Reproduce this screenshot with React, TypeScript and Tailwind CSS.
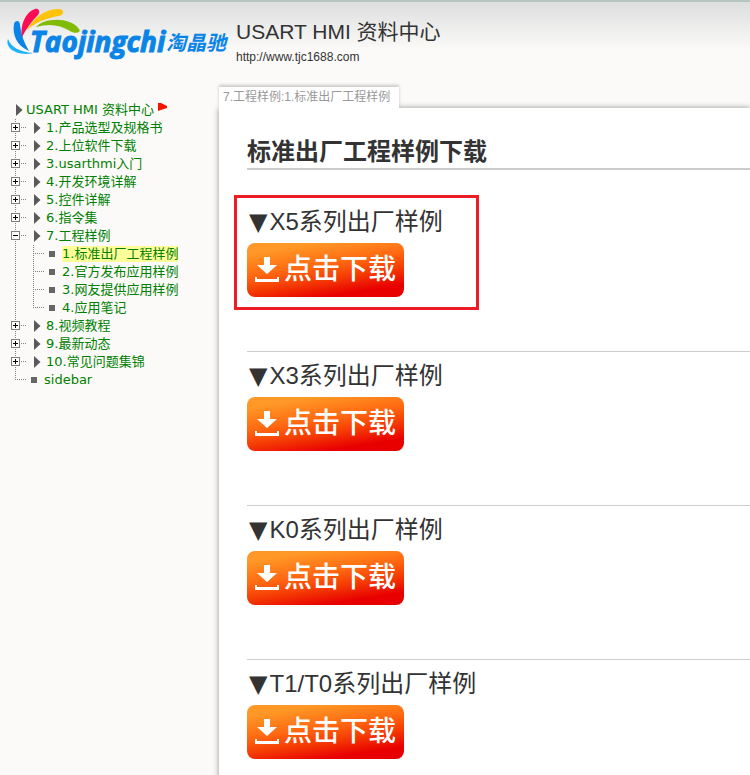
import React from "react";

type Leaf = { label: string; current?: boolean };
type Branch = { label: string; children?: Leaf[] };

const branches: Branch[] = [
  { label: "1.产品选型及规格书" },
  { label: "2.上位软件下载" },
  { label: "3.usarthmi入门" },
  { label: "4.开发环境详解" },
  { label: "5.控件详解" },
  { label: "6.指令集" },
  {
    label: "7.工程样例",
    children: [
      { label: "1.标准出厂工程样例", current: true },
      { label: "2.官方发布应用样例" },
      { label: "3.网友提供应用样例" },
      { label: "4.应用笔记" },
    ],
  },
  { label: "8.视频教程" },
  { label: "9.最新动态" },
  { label: "10.常见问题集锦" },
];

const downloads = ["X5系列出厂样例", "X3系列出厂样例", "K0系列出厂样例", "T1/T0系列出厂样例"];

/* Dotted connector of one tree row, with an optional fold box. */
function Twig({ box, line = "through", arm = true }: { box?: "plus" | "minus"; line?: "through" | "end"; arm?: boolean }) {
  return (
    <svg className="h-[18px] w-4 shrink-0" viewBox="0 0 16 18" shapeRendering="crispEdges" aria-hidden="true">
      <path d={line === "through" ? "M4.5 0V18" : "M4.5 0V9"} stroke="#808080" strokeDasharray="1 1" fill="none" />
      {arm && <path d="M4 8.5H15" stroke="#808080" strokeDasharray="1 1" fill="none" />}
      {box && (
        <>
          <rect x="0.5" y="4.5" width="8" height="8" fill="#fff" stroke="#808080" />
          <path d={box === "plus" ? "M2 8.5H7M4.5 6V11" : "M2 8.5H7"} stroke="#000" fill="none" />
        </>
      )}
    </svg>
  );
}

function Arrow() {
  return (
    <svg className="h-3 w-[7px] shrink-0" viewBox="0 0 7 12" aria-hidden="true">
      <path d="M0 0L6.5 6L0 12Z" fill="#5a5a5a" />
    </svg>
  );
}

function Bullet() {
  return <span className="size-1.5 shrink-0 bg-[#666]" />;
}

function TreeLink({ children, current }: { children: React.ReactNode; current?: boolean }) {
  return (
    <a href="#" aria-current={current ? "page" : undefined} className={current ? "bg-[#ffff99] leading-4" : "leading-4"}>
      {children}
    </a>
  );
}

function Logo() {
  return (
    <svg className="h-[60px] w-[232px] shrink-0" viewBox="0 0 232 60" role="img" aria-label="Taojingchi 淘晶驰">
      <path d="M8 39C11 47 20 52 33 53C26 55 14 54 9 47C7 44 7 41 8 39Z" fill="#1fb2fb" />
      <path d="M14 24C12 35 17 46 29 51C24 43 21 34 20 25C20 20 15 20 14 24Z" fill="#0a84e6" />
      <path d="M35 9C26 12 20 24 22 37C26 29 32 21 38 15C41 11 38 8 35 9Z" fill="#fb0c55" />
      <path d="M59 9C46 8 33 18 27 30C36 22 47 18 59 16C65 15 64 9 59 9Z" fill="#ffc30b" />
      <path d="M36 27C43 18 70 16 79 29C82 33 74 34 70 31C60 25 50 23 36 27Z" fill="#80bb05" />
      <text
        x="30"
        y="52"
        fill="#0a84e6"
        stroke="#0a84e6"
        className="font-['Open_Sans','Liberation_Sans',sans-serif] text-[28px] font-bold italic"
      >
        Taojingchi
      </text>
      <text
        x="166"
        y="50"
        fill="#0a84e6"
        className="font-['Liberation_Sans','Noto_Sans_CJK_SC',sans-serif] text-[20px] font-bold italic"
      >
        淘晶驰
      </text>
    </svg>
  );
}

function DownloadButton() {
  return (
    <button
      type="button"
      className="flex h-[54px] w-[157px] items-center gap-[5px] rounded-lg bg-[linear-gradient(171deg,#ff9826_14%,#ff6a12_42%,#f53c04_62%,#e80000_84%)] pl-2 text-[28px] leading-[56px] font-medium text-white"
    >
      <svg className="h-[26px] w-6 shrink-0" viewBox="0 0 24 26" fill="#fff" aria-hidden="true">
        <path d="M9 0H15V8H22L12 17L2 8H9Z" />
        <path d="M0 20H2V22H22V20H24V25H0Z" />
      </svg>
      <span className="whitespace-nowrap">点击下载</span>
    </button>
  );
}

function SectionTitle({ children }: { children: React.ReactNode }) {
  return (
    <h3 className="flex items-center gap-0.5 pt-[5px] pb-0.5 pl-0.5 text-2xl leading-[38px] font-normal">
      <span className="font-['DejaVu_Sans',sans-serif]">▼</span>
      <span>{children}</span>
    </h3>
  );
}

export default function App() {
  return (
    <div className="flex min-h-screen flex-col overflow-x-hidden bg-[#fbfaf9] font-['Liberation_Sans','Noto_Sans_CJK_SC',sans-serif] text-[#333]">
      <header className="flex h-[87px] border-t-2 border-[#b8c4bf] bg-[linear-gradient(#dcdedd,#fbfaf9_48px)]">
        <div className="-mt-0.5">
          <Logo />
        </div>
        <div className="pt-3.5 pl-1">
          <h1 className="text-[21px] leading-8">USART HMI 资料中心</h1>
          <p className="text-xs leading-[18px]">http://www.tjc1688.com</p>
        </div>
      </header>

      <div className="flex grow">
        <nav
          aria-label="目录"
          className="w-[219px] shrink-0 pt-3.5 pl-[11px] font-['DejaVu_Sans','Noto_Sans_CJK_SC',sans-serif] text-[13px] whitespace-nowrap text-[#008000]"
        >
          <div className="flex h-[18px] items-center pl-[5px]">
            <Arrow />
            <span className="ml-[3px] flex">
              <TreeLink>USART HMI 资料中心</TreeLink>
            </span>
            <svg className="mt-0.5 ml-1 h-2 w-[9px] self-start" viewBox="0 0 9 8" aria-hidden="true">
              <path d="M0 0H3L9 3V5L0 8Z" fill="#f51400" />
            </svg>
          </div>
          <ul>
            {branches.map((branch) => (
              <li key={branch.label}>
                <div className="flex h-[18px] items-center">
                  <Twig box={branch.children ? "minus" : "plus"} />
                  <span className="mr-[5px] ml-[7px] flex">
                    <Arrow />
                  </span>
                  <TreeLink>{branch.label}</TreeLink>
                </div>
                {branch.children && (
                  <ul>
                    {branch.children.map((leaf, i) => (
                      <li key={leaf.label} className="flex h-[18px] items-center">
                        <Twig arm={false} />
                        <span className="ml-0.5 flex">
                          <Twig line={i === branch.children!.length - 1 ? "end" : "through"} />
                        </span>
                        <span className="mr-[7px] ml-1 flex">
                          <Bullet />
                        </span>
                        <TreeLink current={leaf.current}>{leaf.label}</TreeLink>
                      </li>
                    ))}
                  </ul>
                )}
              </li>
            ))}
            <li className="flex h-[18px] items-center">
              <Twig line="end" />
              <span className="mr-[7px] ml-1 flex">
                <Bullet />
              </span>
              <TreeLink>sidebar</TreeLink>
            </li>
          </ul>
        </nav>

        <main className="flex min-w-0 grow flex-col">
          <div className="z-10 w-[180px] bg-white pl-1 text-xs leading-[21px] whitespace-nowrap text-[#999] shadow-[0_-2px_3px_rgba(0,0,0,0.2)]">
            7.工程样例:1.标准出厂工程样例
          </div>
          <div className="grow bg-white pt-7 pl-7 shadow-[0_0_6px_rgba(0,0,0,0.4)]">
            <h2 className="border-b-2 border-[#ccc] text-2xl leading-8 font-bold">标准出厂工程样例下载</h2>
            {downloads.map((title, i) => (
              <section
                key={title}
                className={i === 0 ? "relative mt-[27px] h-[154px] border-t border-transparent" : "h-[154px] border-t border-[#ccc]"}
              >
                <SectionTitle>{title}</SectionTitle>
                <DownloadButton />
                {i === 0 && (
                  <div className="pointer-events-none absolute -top-[3px] -left-[13px] h-[115px] w-[245px] border-[3px] border-[#ee1c25]" />
                )}
              </section>
            ))}
          </div>
        </main>
      </div>
    </div>
  );
}
